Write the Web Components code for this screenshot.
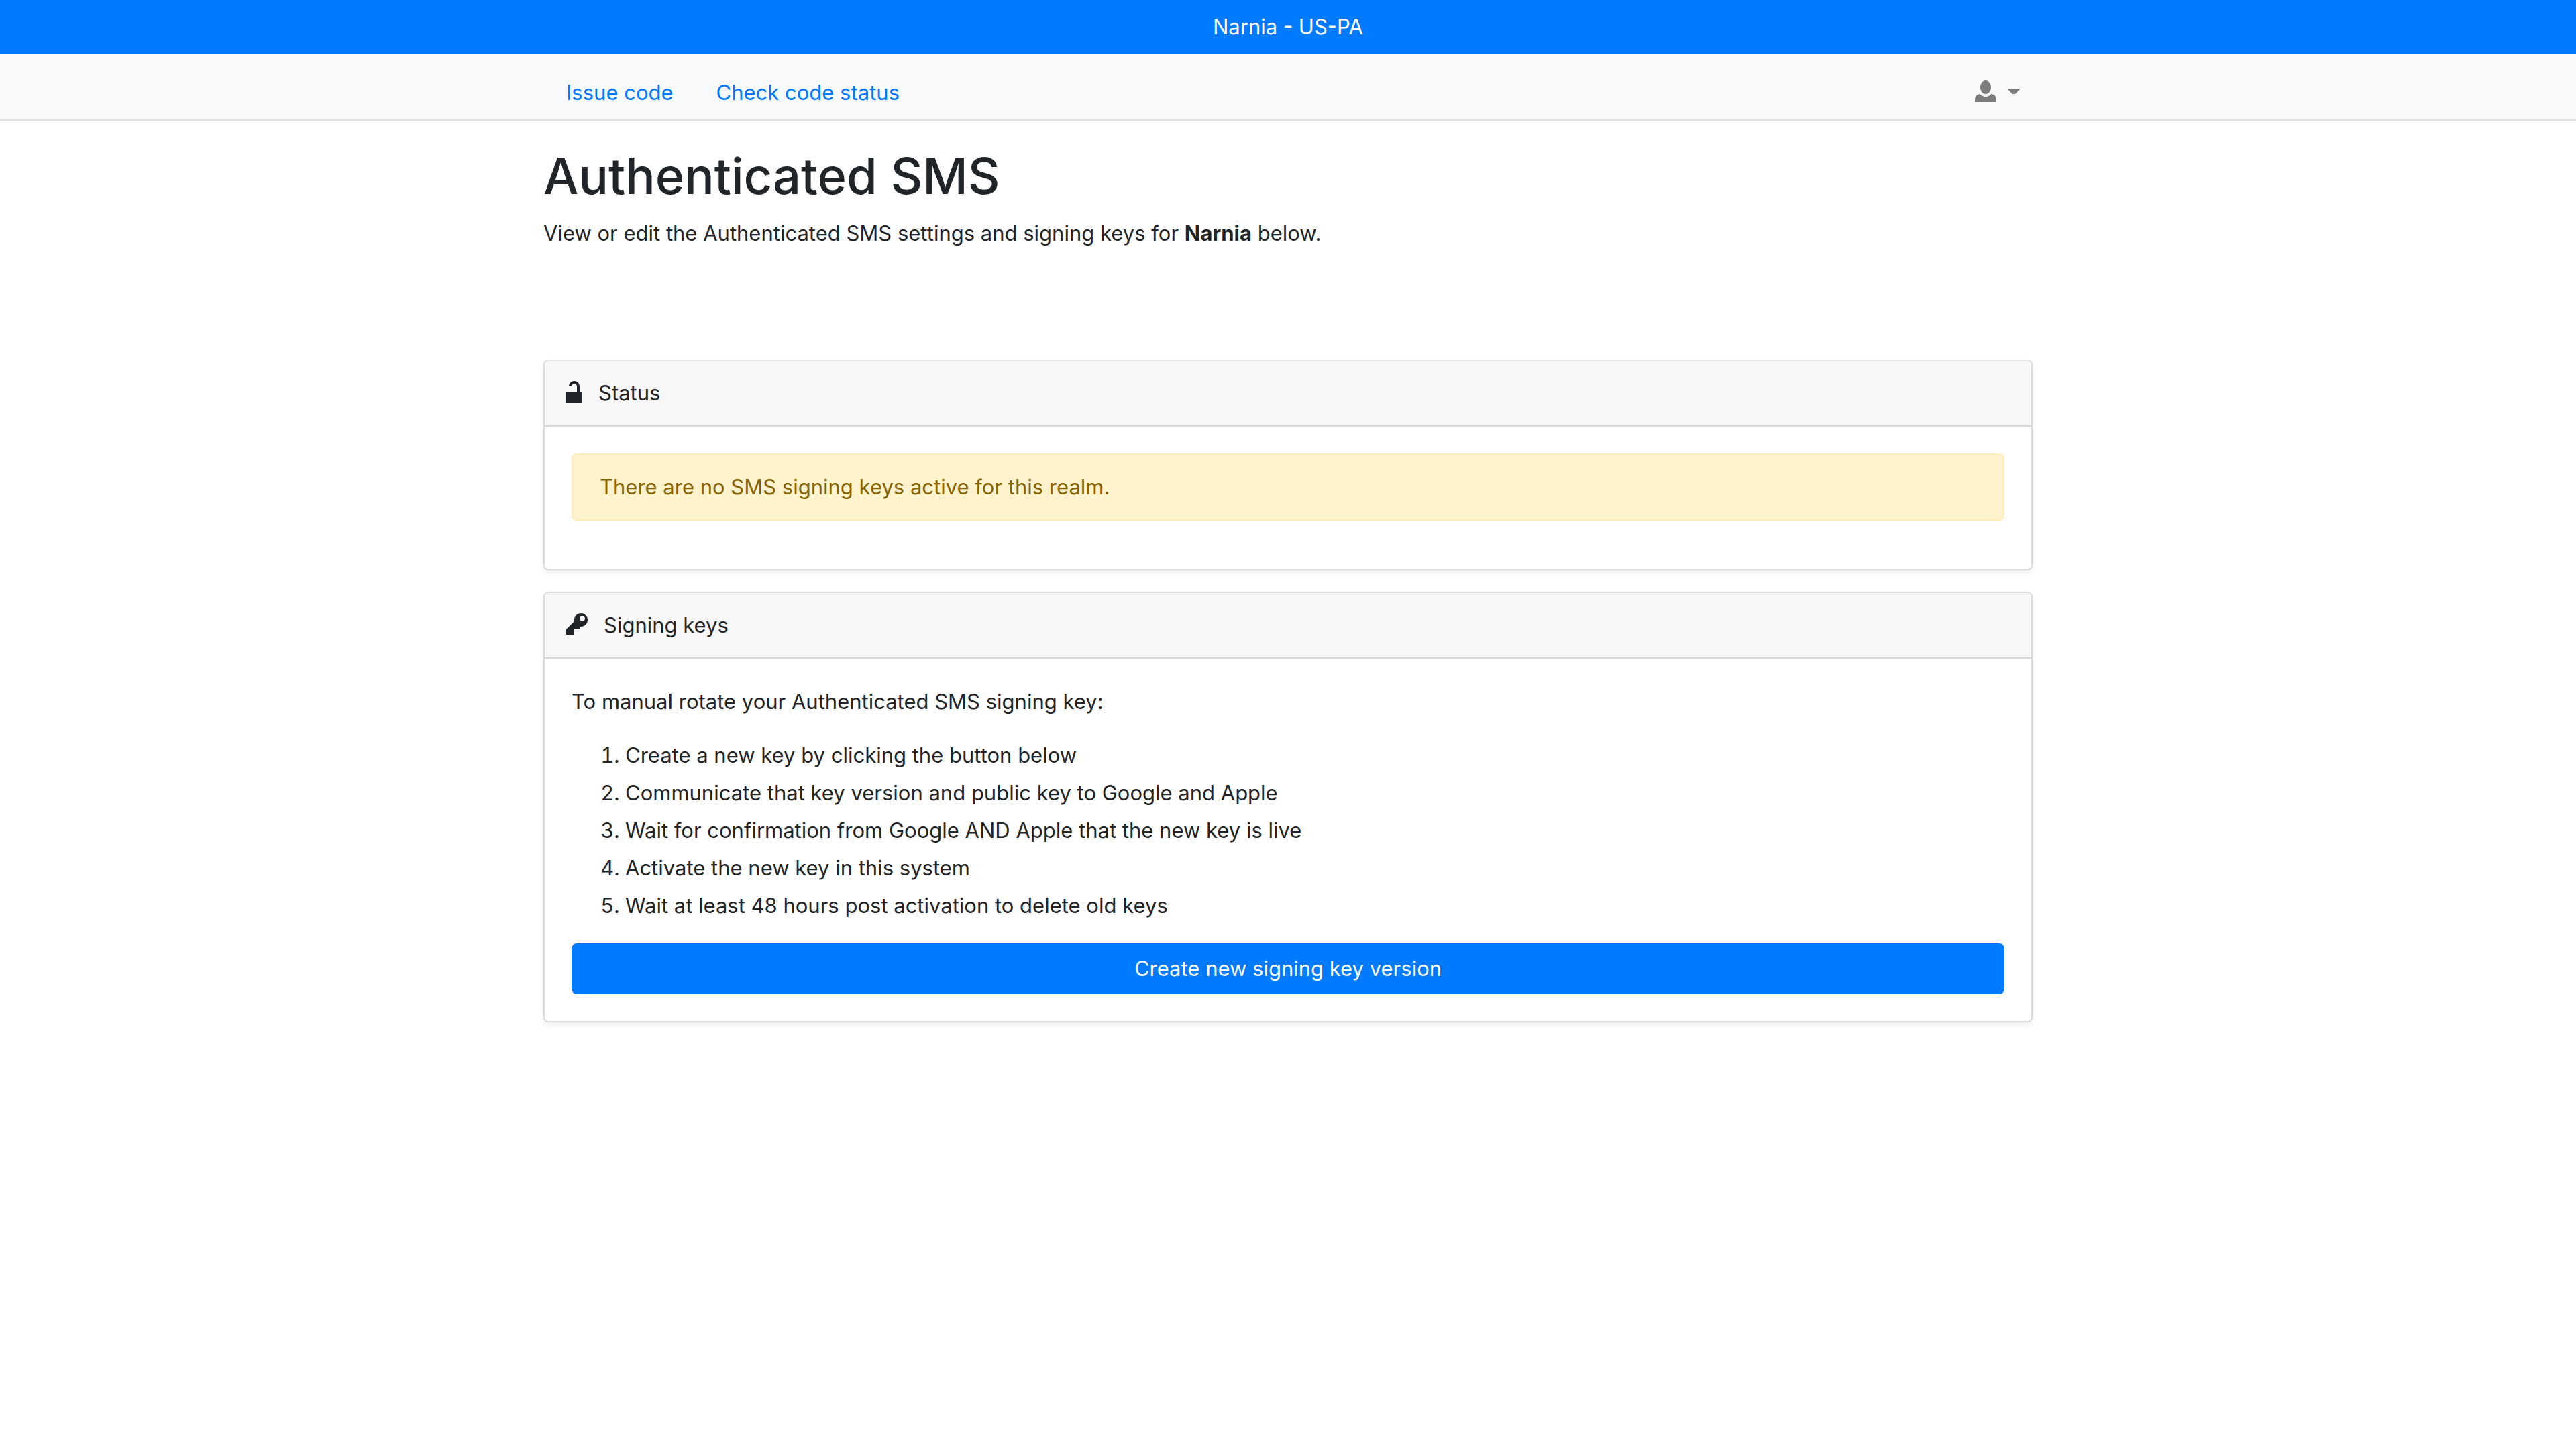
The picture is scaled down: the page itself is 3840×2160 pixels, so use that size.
<!DOCTYPE html>
<html lang="en">
<head>
<meta charset="utf-8">
<meta name="viewport" content="width=device-width, initial-scale=1">
<title>Authenticated SMS</title>
<style>
  :root {
    --primary: #007bff;
    --ink: #212529;
    --line: rgba(0, 0, 0, .125);
  }
  body {
    margin: 0;
    background: #fff;
    color: var(--ink);
    font: 400 31px/48px Inter, "Liberation Sans", sans-serif;
  }
</style>
</head>
<body>
<realm-page></realm-page>

<template id="realm-banner">
  <style>
    :host { display: block; padding: 16px; background: var(--primary); color: #fff; text-align: center; }
  </style>
  <slot></slot>
</template>

<template id="oi-icon">
  <style>
    :host { display: block; flex: none; }
    svg { display: block; height: 32px; fill: currentColor; }
  </style>
  <svg aria-hidden="true"><path/></svg>
</template>

<template id="page-container">
  <style>
    :host { display: block; box-sizing: border-box; width: 100%; max-width: 2280px; margin: 0 auto; padding: 0 30px; }
  </style>
  <slot></slot>
</template>

<template id="nav-bar">
  <style>
    :host { display: block; background: #f8f9fa; border-bottom: 2px solid #dee2e6; }
    nav { display: flex; justify-content: space-between; padding-top: 18px; }
    ul { display: flex; margin: 0; padding: 0 2px; list-style: none; }
    a { display: block; padding: 16px 32px; color: var(--primary); text-decoration: none; }
    button { display: flex; align-items: center; gap: 16px; padding: 0 18px 4px 16px; border: 0; background: none; color: rgba(0, 0, 0, .5); font: inherit; cursor: pointer; }
    .caret { display: block; width: 20px; height: 8px; fill: currentColor; }
  </style>
  <page-container>
    <nav>
      <ul>
        <li><a href="#issue">Issue code</a></li>
        <li><a href="#status">Check code status</a></li>
      </ul>
      <button type="button" aria-label="Account menu" aria-haspopup="true">
        <oi-icon name="person"></oi-icon>
        <svg class="caret" viewBox="0 0 20 8" aria-hidden="true"><path d="M0 0h20l-8 8h-4z"/></svg>
      </button>
    </nav>
  </page-container>
</template>

<template id="info-card">
  <style>
    :host { display: block; border: 2px solid var(--line); border-radius: 8px; background: #fff; background-clip: padding-box; box-shadow: 0 4px 8px rgba(0, 0, 0, .075); }
    header { display: flex; align-items: center; gap: 24px; padding: 24px 32px; border-bottom: 2px solid var(--line); border-radius: 6px 6px 0 0; background: #f7f7f7; }
    oi-icon { margin-bottom: 4px; }
    .body { padding: 40px; }
  </style>
  <header><oi-icon></oi-icon><slot name="title"></slot></header>
  <div class="body"><slot></slot></div>
</template>

<template id="alert-box">
  <style>
    :host { display: block; margin-bottom: 32px; padding: 24px 40px; border: 2px solid #ffeeba; border-radius: 8px; background: #fff3cd; color: #856404; }
  </style>
  <slot></slot>
</template>

<template id="realm-page">
  <style>
    :host { display: block; }
    h1 { margin: 0 0 14px; font-size: 74px; line-height: 96px; font-weight: 500; }
    p { margin: 0 0 32px; }
    main { display: block; padding: 34px 0; }
    .intro { margin-bottom: 164px; }
    .cards { display: flex; flex-direction: column; gap: 32px; }
    ol { display: flex; flex-direction: column; gap: 8px; margin: 0 0 32px; padding-left: 80px; }
    button { display: block; width: 100%; padding: 12px 24px; border: 2px solid var(--primary); border-radius: 8px; background: var(--primary); color: #fff; font: inherit; cursor: pointer; }
  </style>
  <realm-banner role="banner">Narnia - US-PA</realm-banner>
  <nav-bar></nav-bar>
  <page-container>
    <main>
      <h1>Authenticated SMS</h1>
      <p class="intro">View or edit the Authenticated SMS settings and signing keys for <strong>Narnia</strong> below.</p>
      <div class="cards">
        <info-card icon="lock-unlocked">
          <span slot="title">Status</span>
          <alert-box role="alert">There are no SMS signing keys active for this realm.</alert-box>
        </info-card>
        <info-card icon="key">
          <span slot="title">Signing keys</span>
          <p>To manual rotate your Authenticated SMS signing key:</p>
          <ol>
            <li>Create a new key by clicking the button below</li>
            <li>Communicate that key version and public key to Google and Apple</li>
            <li>Wait for confirmation from Google AND Apple that the new key is live</li>
            <li>Activate the new key in this system</li>
            <li>Wait at least 48 hours post activation to delete old keys</li>
          </ol>
          <button type="button">Create new signing key version</button>
        </info-card>
      </div>
    </main>
  </page-container>
</template>

<script>
  const ICONS = {
    person: [8, 'M4 0c-1.1 0-2 1.12-2 2.5s.9 2.5 2 2.5 2-1.12 2-2.5-.9-2.5-2-2.5zm-2.09 5c-1.06.05-1.91.92-1.91 2v1h8v-1c0-1.08-.84-1.95-1.91-2-.54.61-1.28 1-2.09 1-.81 0-1.55-.39-2.09-1z'],
    'lock-unlocked': [6, 'M3 0c-1.1 0-2 .9-2 2h1c0-.56.44-1 1-1s1 .44 1 1v2h-4v4h6v-4h-1v-2c0-1.1-.9-2-2-2z'],
    key: [8, 'M5.5 0c-1.38 0-2.5 1.12-2.5 2.5 0 .16 0 .32.03.47l-3.03 3.03v2h3v-2h2v-1l.03-.03c.15.03.31.03.47.03 1.38 0 2.5-1.12 2.5-2.5s-1.12-2.5-2.5-2.5zm.5 1c.55 0 1 .45 1 1s-.45 1-1 1-1-.45-1-1 .45-1 1-1z']
  };

  class TemplateElement extends HTMLElement {
    constructor() {
      super();
      const template = document.getElementById(this.localName);
      this.attachShadow({ mode: 'open' }).append(document.importNode(template.content, true));
    }
  }

  class OiIcon extends TemplateElement {
    static observedAttributes = ['name'];
    attributeChangedCallback() {
      const [width, path] = ICONS[this.getAttribute('name')];
      const svg = this.shadowRoot.querySelector('svg');
      svg.setAttribute('viewBox', `0 0 ${width} 8`);
      svg.setAttribute('width', width * 4);
      svg.firstElementChild.setAttribute('d', path);
    }
  }

  class InfoCard extends TemplateElement {
    connectedCallback() {
      this.shadowRoot.querySelector('oi-icon').setAttribute('name', this.getAttribute('icon'));
    }
  }

  customElements.define('oi-icon', OiIcon);
  customElements.define('page-container', class extends TemplateElement {});
  customElements.define('realm-banner', class extends TemplateElement {});
  customElements.define('nav-bar', class extends TemplateElement {});
  customElements.define('alert-box', class extends TemplateElement {});
  customElements.define('info-card', InfoCard);
  customElements.define('realm-page', class extends TemplateElement {});
</script>
</body>
</html>
